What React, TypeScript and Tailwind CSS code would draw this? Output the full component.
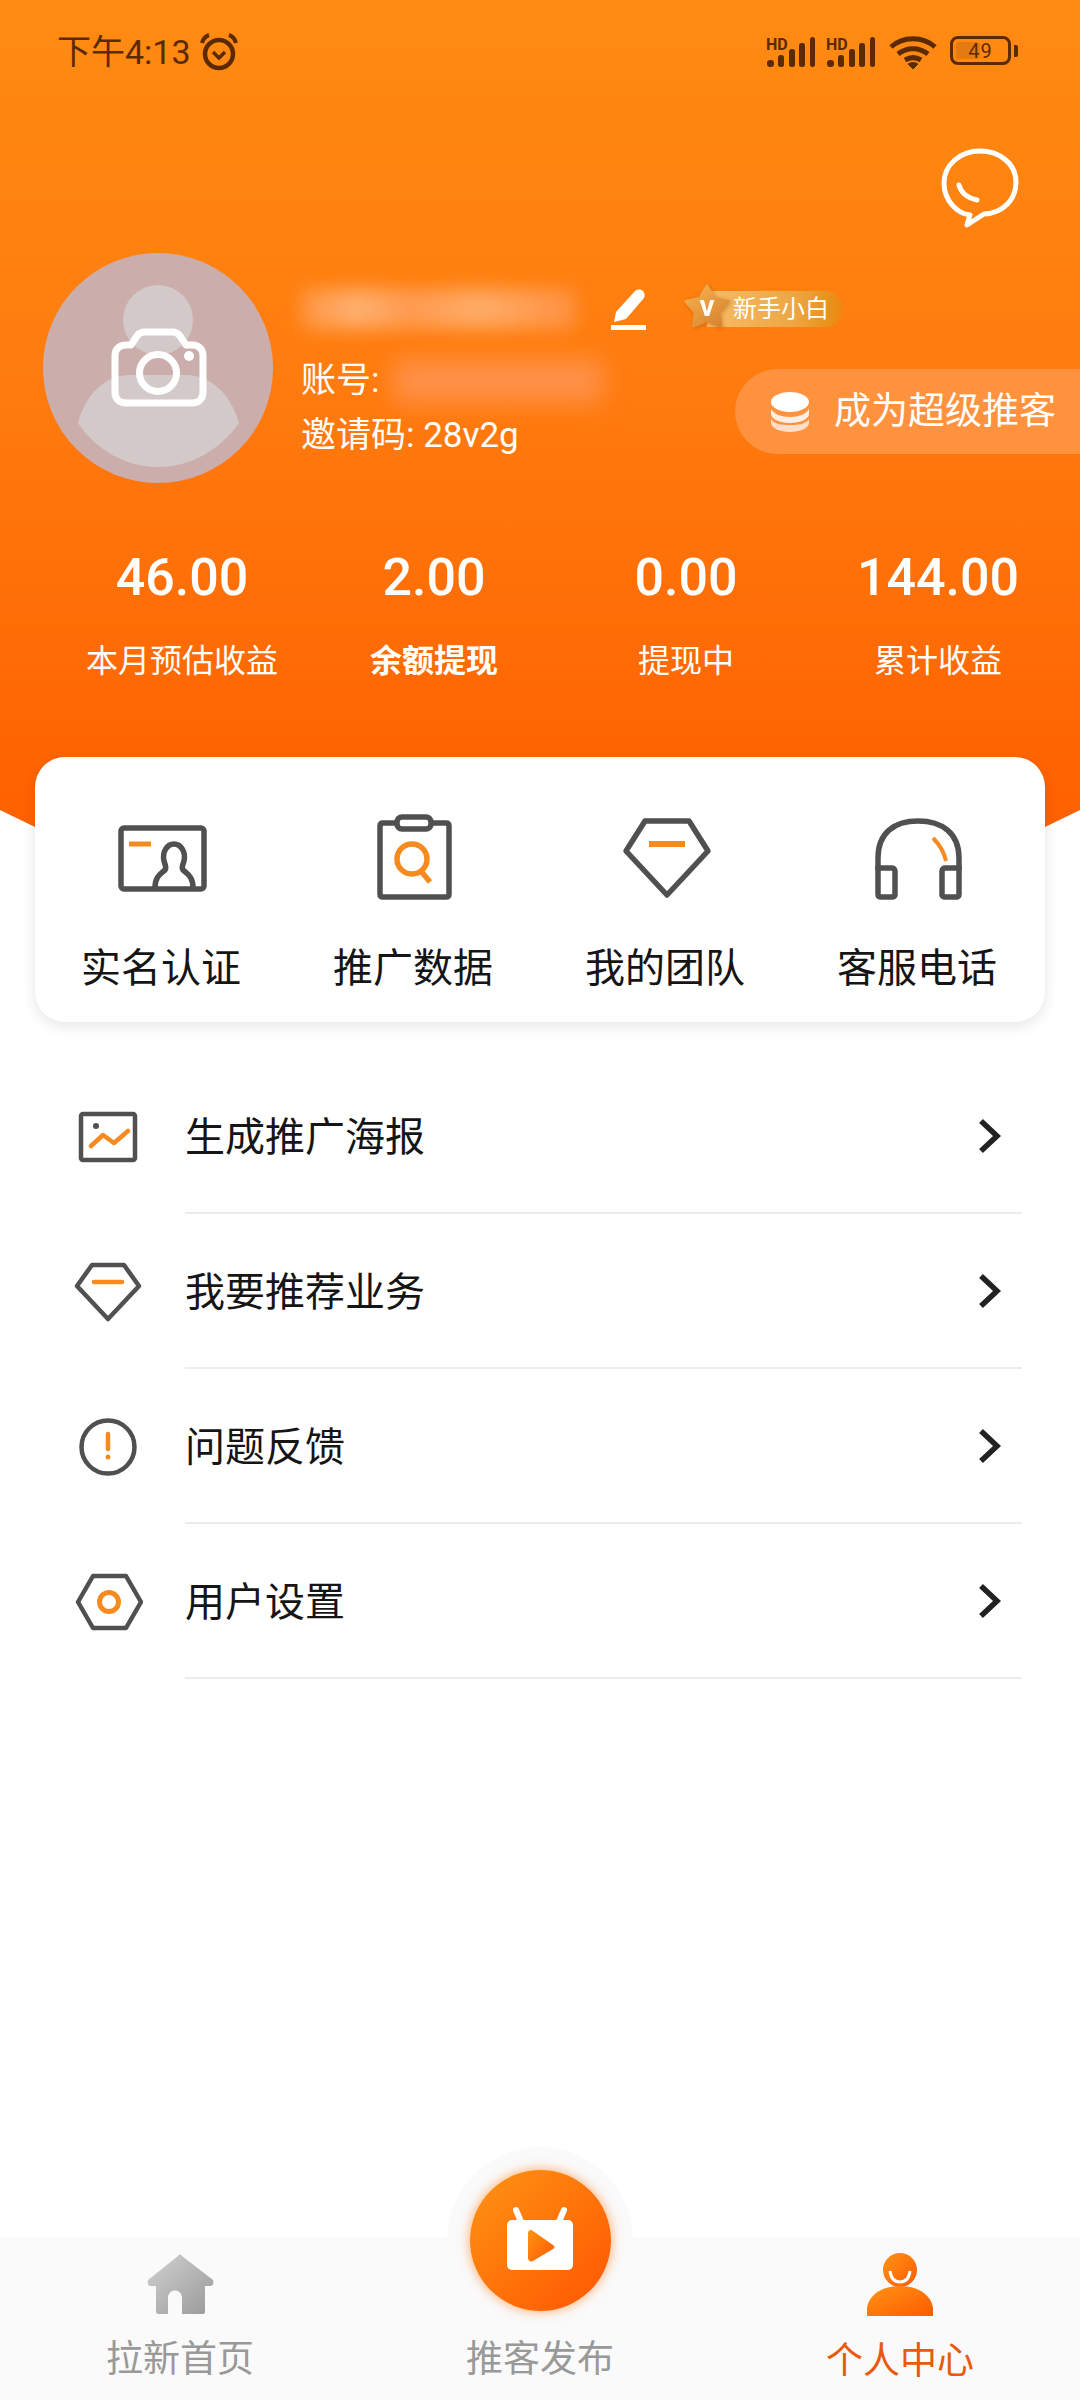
import React from "react";

const Signal = () => (
  <svg width="50" height="32" viewBox="0 0 50 32" className="block overflow-visible">
    <text x="0" y="14" fontSize="16" fontWeight="700" fill="#5c2a00" fontFamily="Roboto, sans-serif">HD</text>
    <g fill="#5c2a00">
      <rect x="1" y="24" width="7" height="7" rx="3" />
      <rect x="12" y="19" width="6" height="12" rx="2.5" />
      <rect x="23" y="13" width="6" height="18" rx="2.5" />
      <rect x="33" y="7" width="6" height="24" rx="2.5" />
      <rect x="44" y="1" width="5" height="30" rx="2.5" />
    </g>
  </svg>
);

const StatusBar = () => (
  <div className="h-[100px] pt-[32px] pl-[57px] flex items-start text-[#5c2a00]">
    <span className="text-[34px] leading-[40px]">下午4:13</span>
    <svg width="40" height="40" viewBox="0 0 40 40" className="ml-[8px]" fill="none" stroke="#5c2a00">
      <circle cx="20" cy="22" r="14" strokeWidth="4.5" />
      <path d="M14 20l6 6 6-6" strokeWidth="3.5" />
      <path d="M3 11c1-4 4-7 7-8M37 11c-1-4-4-7-7-8" strokeWidth="4" />
    </svg>
    <div className="ml-auto pr-[62px] flex items-start pt-[4px]">
      <Signal />
      <div className="ml-[10px]"><Signal /></div>
      <svg width="48" height="34" viewBox="0 0 48 34" className="ml-[13px]" fill="none" stroke="#5c2a00" strokeWidth="5">
        <path d="M2 11C14 0 34 0 46 11" />
        <path d="M9 18c9-7 21-7 30 0" />
        <path d="M16 24c5-3 11-3 16 0" />
        <path d="M24 33l-5-5c3-2 7-2 10 0z" fill="#5c2a00" strokeWidth="1" />
      </svg>
      <div className="ml-[13px] relative w-[61px] h-[29px] border-[3px] border-[#5c2a00] rounded-[8px] flex items-center justify-center">
        <div className="absolute left-[3px] top-[3px] bottom-[3px] w-[24px] bg-[#e57a10] rounded-[3px]" />
        <span className="relative text-[20px] leading-[20px] tracking-[1px] text-[#5c2a00]">49</span>
      </div>
      <div className="w-[4px] h-[12px] ml-[3px] mt-[9px] bg-[#5c2a00] rounded-r-[2px]" />
    </div>
  </div>
);

const ChatIcon = () => (
  <svg width="84" height="84" viewBox="938 146 84 84" fill="none" stroke="#fff" strokeWidth="5" className="block">
    <path d="M980 151c-20 0-36 14-36 32s14 31 26 32l-3 10 17-11c20-1 32-15 32-32 0-18-16-31-36-31z" strokeLinejoin="round" />
    <path d="M959 185c2 8 9 13 18 15" strokeWidth="5" strokeLinecap="round" />
  </svg>
);

const Avatar = () => (
  <div className="w-[230px] h-[230px] rounded-full bg-[#cbaeac] shrink-0">
    <svg width="230" height="230" viewBox="43 253 230 230" fill="none" className="block">
      <circle cx="158" cy="320" r="35" fill="#d4c9c9" />
      <path d="M78 423C85 395 105 375 130 375H186C211 375 231 395 239 423 220 450 190 467 158 467S96 450 78 423Z" fill="#d4c9c9" />
      <path d="M131 345l6-9c2-3 4-4 8-4h27c4 0 6 1 8 4l6 9h6c7 0 11 4 11 11v36c0 7-4 11-11 11h-66c-7 0-11-4-11-11v-36c0-7 4-11 11-11z" stroke="#fff" strokeWidth="7" strokeLinejoin="round" />
      <circle cx="158" cy="373" r="18.5" stroke="#fff" strokeWidth="7" />
      <circle cx="189" cy="356" r="5" fill="#fff" />
    </svg>
  </div>
);

const Pencil = () => (
  <svg width="36" height="42" viewBox="0 0 36 42" className="block" fill="#fff">
    <path d="M5 24L24 3c2-2 6-2 8 0s2 5 1 7L15 31 3 34z" />
    <rect x="0" y="37" width="35" height="5" />
  </svg>
);

const Badge = () => (
  <div className="ml-[60px] relative flex items-center h-[36px] pl-[26px] pr-[14px] rounded-r-[18px] bg-[linear-gradient(90deg,#f7bc68,#eda642_65%,#e8921a_90%,#f08614)]">
    <svg width="48" height="48" viewBox="0 0 48 48" className="absolute left-[-24px] top-[-8px] drop-shadow-[1px_1px_2px_rgba(160,80,0,0.45)]">
      <defs>
        <linearGradient id="star" x1="0" y1="0" x2="0.8" y2="1">
          <stop offset="0" stopColor="#f8b452" />
          <stop offset="1" stopColor="#d9842e" />
        </linearGradient>
      </defs>
      <path d="M24 3L31.3 15.5 45 18.5 35.9 29 37.5 43 24 37.5 10.5 43 12.1 29 3 18.5 16.7 15.5z" fill="url(#star)" stroke="url(#star)" strokeWidth="3" strokeLinejoin="round" />
      <text x="24" y="33" textAnchor="middle" fontSize="22" fontWeight="900" fill="#fff" fontFamily="Roboto, sans-serif">V</text>
    </svg>
    <span className="text-[24px] leading-[30px] text-white">新手小白</span>
  </div>
);

const Coins = () => (
  <svg width="40" height="40" viewBox="0 0 40 40" fill="#fff" className="block">
    <ellipse cx="20" cy="10" rx="19" ry="10" />
    <path d="M1 17c3 5 10 8 19 8s16-3 19-8v5c0 5-9 9-19 9S1 27 1 22z" opacity=".85" />
    <path d="M1 27c3 5 10 6 19 6s16-1 19-6v4c0 5-9 9-19 9S1 36 1 31z" opacity=".7" />
  </svg>
);

const stats = [
  { v: "46.00", l: "本月预估收益" },
  { v: "2.00", l: "余额提现", b: true },
  { v: "0.00", l: "提现中" },
  { v: "144.00", l: "累计收益" },
];

const S = "#505050";
const O = "#f68a1f";

const IdIcon = () => (
  <svg width="90" height="90" viewBox="116 812 90 90" fill="none" stroke={S} strokeWidth="5.5" className="block overflow-visible">
    <rect x="121" y="828" width="83" height="61" rx="3" />
    <path d="M129 844h22" stroke={O} strokeWidth="5" />
    <path d="M155 888c0-12 6-14 10-18 2-3 0-5-1-9-2-9 3-17 10-17s12 8 10 17c-1 4-3 6-1 9 4 4 10 6 10 18" />
  </svg>
);
const ClipIcon = () => (
  <svg width="90" height="90" viewBox="368 812 90 90" fill="none" stroke={S} strokeWidth="5.5" className="block">
    <path d="M396 823h-13c-2 0-3 1-3 3v68c0 2 1 3 3 3h63c2 0 3-1 3-3V826c0-2-1-3-3-3h-13" />
    <rect x="397" y="817" width="34" height="12" rx="5" />
    <circle cx="412" cy="859" r="15" stroke={O} />
    <path d="M421 871l9 11" stroke={O} />
  </svg>
);
const GemIcon = () => (
  <svg width="90" height="90" viewBox="621 812 90 90" fill="none" stroke={S} strokeWidth="5.5" strokeLinejoin="round" className="block overflow-visible">
    <path d="M646 821h44l19 30-41 44-41-44z" />
    <path d="M650 844h36" stroke={O} strokeWidth="6" />
  </svg>
);
const HeadIcon = () => (
  <svg width="90" height="90" viewBox="873 812 90 90" fill="none" stroke={S} strokeWidth="5.5" className="block overflow-visible">
    <path d="M879 870v-12c0-25 16-37 40-37s41 12 41 37v12" />
    <path d="M879 868h14c1 0 3 1 3 3v24c0 1-1 2-3 2h-11c-2 0-3-1-3-3z" />
    <path d="M960 868h-14c-1 0-3 1-3 3v24c0 1 1 2 3 2h11c2 0 3-1 3-3z" />
    <path d="M934 838c7 7 11 14 13 23" stroke={O} strokeWidth="4" />
  </svg>
);

const cards = [
  { t: "实名认证", i: <IdIcon /> },
  { t: "推广数据", i: <ClipIcon /> },
  { t: "我的团队", i: <GemIcon /> },
  { t: "客服电话", i: <HeadIcon /> },
];

const PicSmall = () => (
  <svg width="70" height="70" viewBox="0 0 70 70" fill="none" stroke={S} strokeWidth="4.5" className="block">
    <rect x="8" y="12" width="54" height="46" rx="2" />
    <circle cx="23" cy="24" r="3" fill={S} stroke="none" />
    <path d="M18 44l12-11 11 8 14-12" stroke={O} strokeLinecap="round" strokeLinejoin="round" />
  </svg>
);
const GemSmall = () => (
  <svg width="70" height="70" viewBox="0 0 70 70" fill="none" stroke={S} strokeWidth="4.5" strokeLinejoin="round" className="block">
    <path d="M19 8h32l15 21-31 33L4 29z" />
    <path d="M21 25h28" stroke={O} strokeLinecap="round" />
  </svg>
);
const InfoSmall = () => (
  <svg width="70" height="70" viewBox="0 0 70 70" fill="none" stroke={S} strokeWidth="4.5" className="block">
    <circle cx="35" cy="35" r="26.5" />
    <path d="M35 22v15" stroke={O} strokeLinecap="round" />
    <circle cx="35" cy="45" r="2.5" fill={O} stroke="none" />
  </svg>
);
const HexSmall = () => (
  <svg width="70" height="70" viewBox="0 0 70 70" fill="none" stroke={S} strokeWidth="4.5" strokeLinejoin="round" className="block">
    <path d="M20 9h33l15 26-15 26H20L5 35z" />
    <circle cx="36" cy="35" r="9.5" stroke={O} strokeWidth="5" />
  </svg>
);

const rows = [
  { t: "生成推广海报", i: <PicSmall /> },
  { t: "我要推荐业务", i: <GemSmall /> },
  { t: "问题反馈", i: <InfoSmall /> },
  { t: "用户设置", i: <HexSmall /> },
];

const Chevron = () => (
  <svg width="28" height="36" viewBox="0 0 28 36" fill="none" stroke="#222" strokeWidth="5.5" className="block">
    <path d="M5 3l16 15L5 33" />
  </svg>
);

const HomeIcon = () => (
  <svg width="70" height="62" viewBox="145 2254 70 62" className="block">
    <defs>
      <linearGradient id="homeG" x1="0" y1="0" x2="1" y2="1">
        <stop offset="0" stopColor="#d2d2d2" />
        <stop offset="1" stopColor="#999999" />
      </linearGradient>
    </defs>
    <path d="M178 2256c1-2 3-2 4 0l31 24c1 3 0 6-3 6h-5v26c0 1-1 2-2 2h-21v-16c0-10-14-10-14 0v16h-9c-2 0-3-1-3-2v-26h-5c-3 0-4-3-3-6z" fill="url(#homeG)" />
  </svg>
);

const TvIcon = () => (
  <svg width="76" height="70" viewBox="503 2208 76 70" className="block">
    <defs>
      <linearGradient id="playG" x1="0" y1="0" x2="1" y2="1">
        <stop offset="0" stopColor="#ff9414" />
        <stop offset="1" stopColor="#ff5a00" />
      </linearGradient>
    </defs>
    <path d="M517 2213l6 14M565 2213l-6 14" stroke="#fff" strokeWidth="6" strokeLinecap="round" />
    <rect x="508" y="2223" width="66" height="50" rx="5" fill="#fff" />
    <path d="M529 2236c0-3 3-4 5-2l20 14c2 1 2 3 0 4l-20 12c-2 1-5 0-5-3z" fill="url(#playG)" />
  </svg>
);

const PersonIcon = () => (
  <svg width="70" height="66" viewBox="865 2252 70 66" className="block">
    <defs>
      <linearGradient id="personG" x1="0" y1="0" x2="1" y2="1">
        <stop offset="0" stopColor="#ff9414" />
        <stop offset="1" stopColor="#ff5a00" />
      </linearGradient>
    </defs>
    <circle cx="900" cy="2270" r="17" fill="url(#personG)" />
    <path d="M890 2271c1 8 5 11 10 11s9-3 10-11" fill="none" stroke="#fff" strokeWidth="3" />
    <path d="M867 2316v-8c2-14 16-22 33-22s31 8 33 22v8z" fill="url(#personG)" />
  </svg>
);

export default function App() {
  return (
    <div className="w-[1080px] h-[2400px] flex flex-col bg-white overflow-hidden font-['Roboto','Noto_Sans_CJK_SC',sans-serif]">
      <header className="h-[830px] shrink-0 bg-[linear-gradient(180deg,#ff8b12_0%,#ff7a0e_50%,#ff6000_100%)] [clip-path:polygon(0_0,100%_0,100%_810px,1045px_827px,1045px_830px,35px_830px,35px_827px,0_810px)] text-white">
        <StatusBar />
        <div className="h-[153px] flex justify-end pr-[58px] pt-[46px]">
          <ChatIcon />
        </div>
        <div className="flex items-start pl-[43px]">
          <Avatar />
          <div className="ml-[28px] flex-1">
            <div className="flex items-center h-[44px] mt-[34px]">
              <div className="w-[275px] h-[40px] blur-[9px] bg-[linear-gradient(90deg,#ff9440,#ffb070_20%,#ff9a50_40%,#ffac68_65%,#ff9040)]" />
              <div className="ml-[35px]"><Pencil /></div>
              <Badge />
            </div>
            <div className="flex items-start">
              <div className="mt-[25px] text-[35px] leading-[50px]">
                <div className="flex items-center h-[50px]">
                  <span>账号:</span>
                  <div className="ml-[14px] w-[210px] h-[44px] blur-[12px] bg-[#ff9048]" />
                </div>
                <div className="mt-[5px] whitespace-nowrap">邀请码: 28v2g</div>
              </div>
              <div className="ml-auto mt-[38px] h-[85px] w-[345px] rounded-l-[43px] bg-[#ff923f] flex items-center pl-[35px]">
                <Coins />
                <span className="ml-[24px] text-[37px] leading-[44px] whitespace-nowrap">成为超级推客</span>
              </div>
            </div>
          </div>
        </div>
        <div className="mt-[65px] ml-[56px] mr-[16px] grid grid-cols-4 text-center">
          {stats.map((s) => (
            <div key={s.l} className="flex flex-col items-center">
              <div className="text-[52px] leading-[60px] font-medium">{s.v}</div>
              <div className={`mt-[33px] text-[32px] leading-[40px] ${s.b ? "font-bold" : ""}`}>{s.l}</div>
            </div>
          ))}
        </div>
      </header>

      <section className="relative mt-[-73px] mx-[35px] h-[265px] shrink-0 rounded-[30px] bg-white shadow-[0_4px_14px_rgba(0,0,0,0.10)] grid grid-cols-4 pt-[55px] pr-[2px]">
        {cards.map((c) => (
          <div key={c.t} className="flex flex-col items-center">
            {c.i}
            <div className="mt-[47px] text-[40px] leading-[40px] text-[#151515] whitespace-nowrap">{c.t}</div>
          </div>
        ))}
      </section>

      <main className="flex-1 pt-[37px]">
        {rows.map((r) => (
          <div key={r.t} className="h-[155px] flex items-center pl-[73px]">
            {r.i}
            <div className="ml-[42px] mr-[58px] flex-1 h-full flex items-center justify-between border-b-2 border-[#ececec] pr-[18px]">
              <span className="pt-[4px] text-[40px] leading-[48px] text-[#151515]">{r.t}</span>
              <Chevron />
            </div>
          </div>
        ))}
      </main>

      <nav className="h-[163px] shrink-0 bg-[#fafafa] grid grid-cols-3 text-[37px] leading-[40px] text-[#999]">
        <div className="flex flex-col items-center pt-[17px]">
          <HomeIcon />
          <div className="mt-[24px]">拉新首页</div>
        </div>
        <div className="relative flex flex-col items-center pt-[103px]">
          <div className="absolute top-[-90px] left-1/2 -translate-x-1/2 w-[186px] h-[186px] rounded-full bg-[#fafafa] flex items-center justify-center">
            <div className="w-[141px] h-[141px] rounded-full bg-[linear-gradient(135deg,#ff9414,#ff5500)] shadow-[0_0_12px_rgba(255,110,0,0.6)] flex items-center justify-center">
              <TvIcon />
            </div>
          </div>
          <div className="relative">推客发布</div>
        </div>
        <div className="flex flex-col items-center pt-[15px]">
          <PersonIcon />
          <div className="mt-[24px] text-[#e8590c]">个人中心</div>
        </div>
      </nav>
    </div>
  );
}
